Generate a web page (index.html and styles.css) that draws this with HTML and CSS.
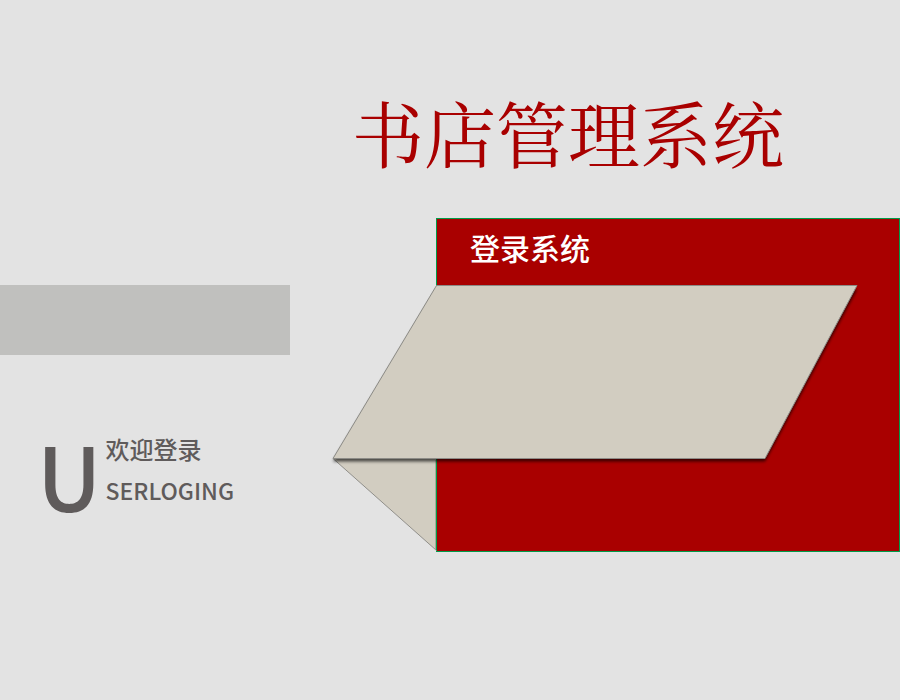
FILE: index.html
```html
<!DOCTYPE html>
<html lang="zh-CN">
<head>
<meta charset="utf-8">
<meta name="viewport" content="width=device-width, initial-scale=1">
<title>书店管理系统</title>
<link rel="stylesheet" href="styles.css">
</head>
<body>
<header class="site-header">
  <h1 class="site-title">书店管理系统</h1>
</header>
<main class="stage">
  <aside class="intro">
    <div class="bar"></div>
    <div class="welcome">
      <span class="initial">U</span>
      <div class="welcome-lines">
        <p class="line-zh">欢迎登录</p>
        <p class="line-en">SERLOGING</p>
      </div>
    </div>
  </aside>
  <section class="panel">
    <h2 class="panel-title">登录系统</h2>
    <svg class="ribbon" width="540" height="290" viewBox="0 0 540 290" aria-hidden="true">
      <defs>
        <filter id="soft" x="-5%" y="-5%" width="110%" height="115%">
          <feGaussianBlur stdDeviation="1.5"/>
        </filter>
      </defs>
      <path d="M5 176.500L108 268V177z" fill="#d2cdc1"/>
      <path d="M5 176.500L108.500 268.500" fill="none" stroke="#908f8a"/>
      <path d="M107.500 178V267" stroke="#a5aa96"/>
      <path d="M108.500 178V268" stroke="#009b48"/>
      <path d="M108.500 4.500H529L437 176.500H5z" transform="translate(0 3)" fill="#000" opacity=".65" filter="url(#soft)"/>
      <path d="M108.500 3.500H529L437 176.500H5z" fill="#d2cdc1" stroke="#8c8b86"/>
    </svg>
  </section>
</main>
</body>
</html>
```
FILE: styles.css
```css
* {
  box-sizing: border-box;
}

body {
  margin: 0;
  background: #e3e3e3;
  color: #5f5b5b;
  font-family: "Noto Sans CJK SC", sans-serif;
}

h1,
h2,
p {
  margin: 0;
}

.site-header {
  padding: 86px 0 42px 352px;
}

.site-title {
  color: #a90000;
  font-family: "Noto Serif CJK SC", "AR PL UMing CN", SimSun, "Noto Sans CJK SC", serif;
  font-size: 72px;
  font-weight: 400;
  line-height: 90px;
  white-space: nowrap;
}

.stage {
  display: grid;
  grid-template-columns: 436px 1fr;
}

.intro {
  padding-top: 67px;
}

.bar {
  width: 290px;
  height: 70px;
  background: #c0c0be;
}

.welcome {
  display: flex;
  align-items: flex-start;
  gap: 4px;
  margin-top: 74px;
  padding-left: 37px;
  font-weight: 500;
}

.initial {
  font-size: 88px;
  line-height: 90px;
}

.line-zh {
  font-size: 24px;
  line-height: 40px;
}

.line-en {
  font-size: 23px;
  line-height: 42px;
}

.panel {
  position: relative;
  min-height: 334px;
  padding: 10px 33px;
  border: 1px solid #009b48;
  background: #a90000;
}

.panel-title {
  color: #fff;
  font-size: 30px;
  font-weight: 500;
  line-height: 36px;
}

.ribbon {
  position: absolute;
  top: 63px;
  left: -109px;
}
```
